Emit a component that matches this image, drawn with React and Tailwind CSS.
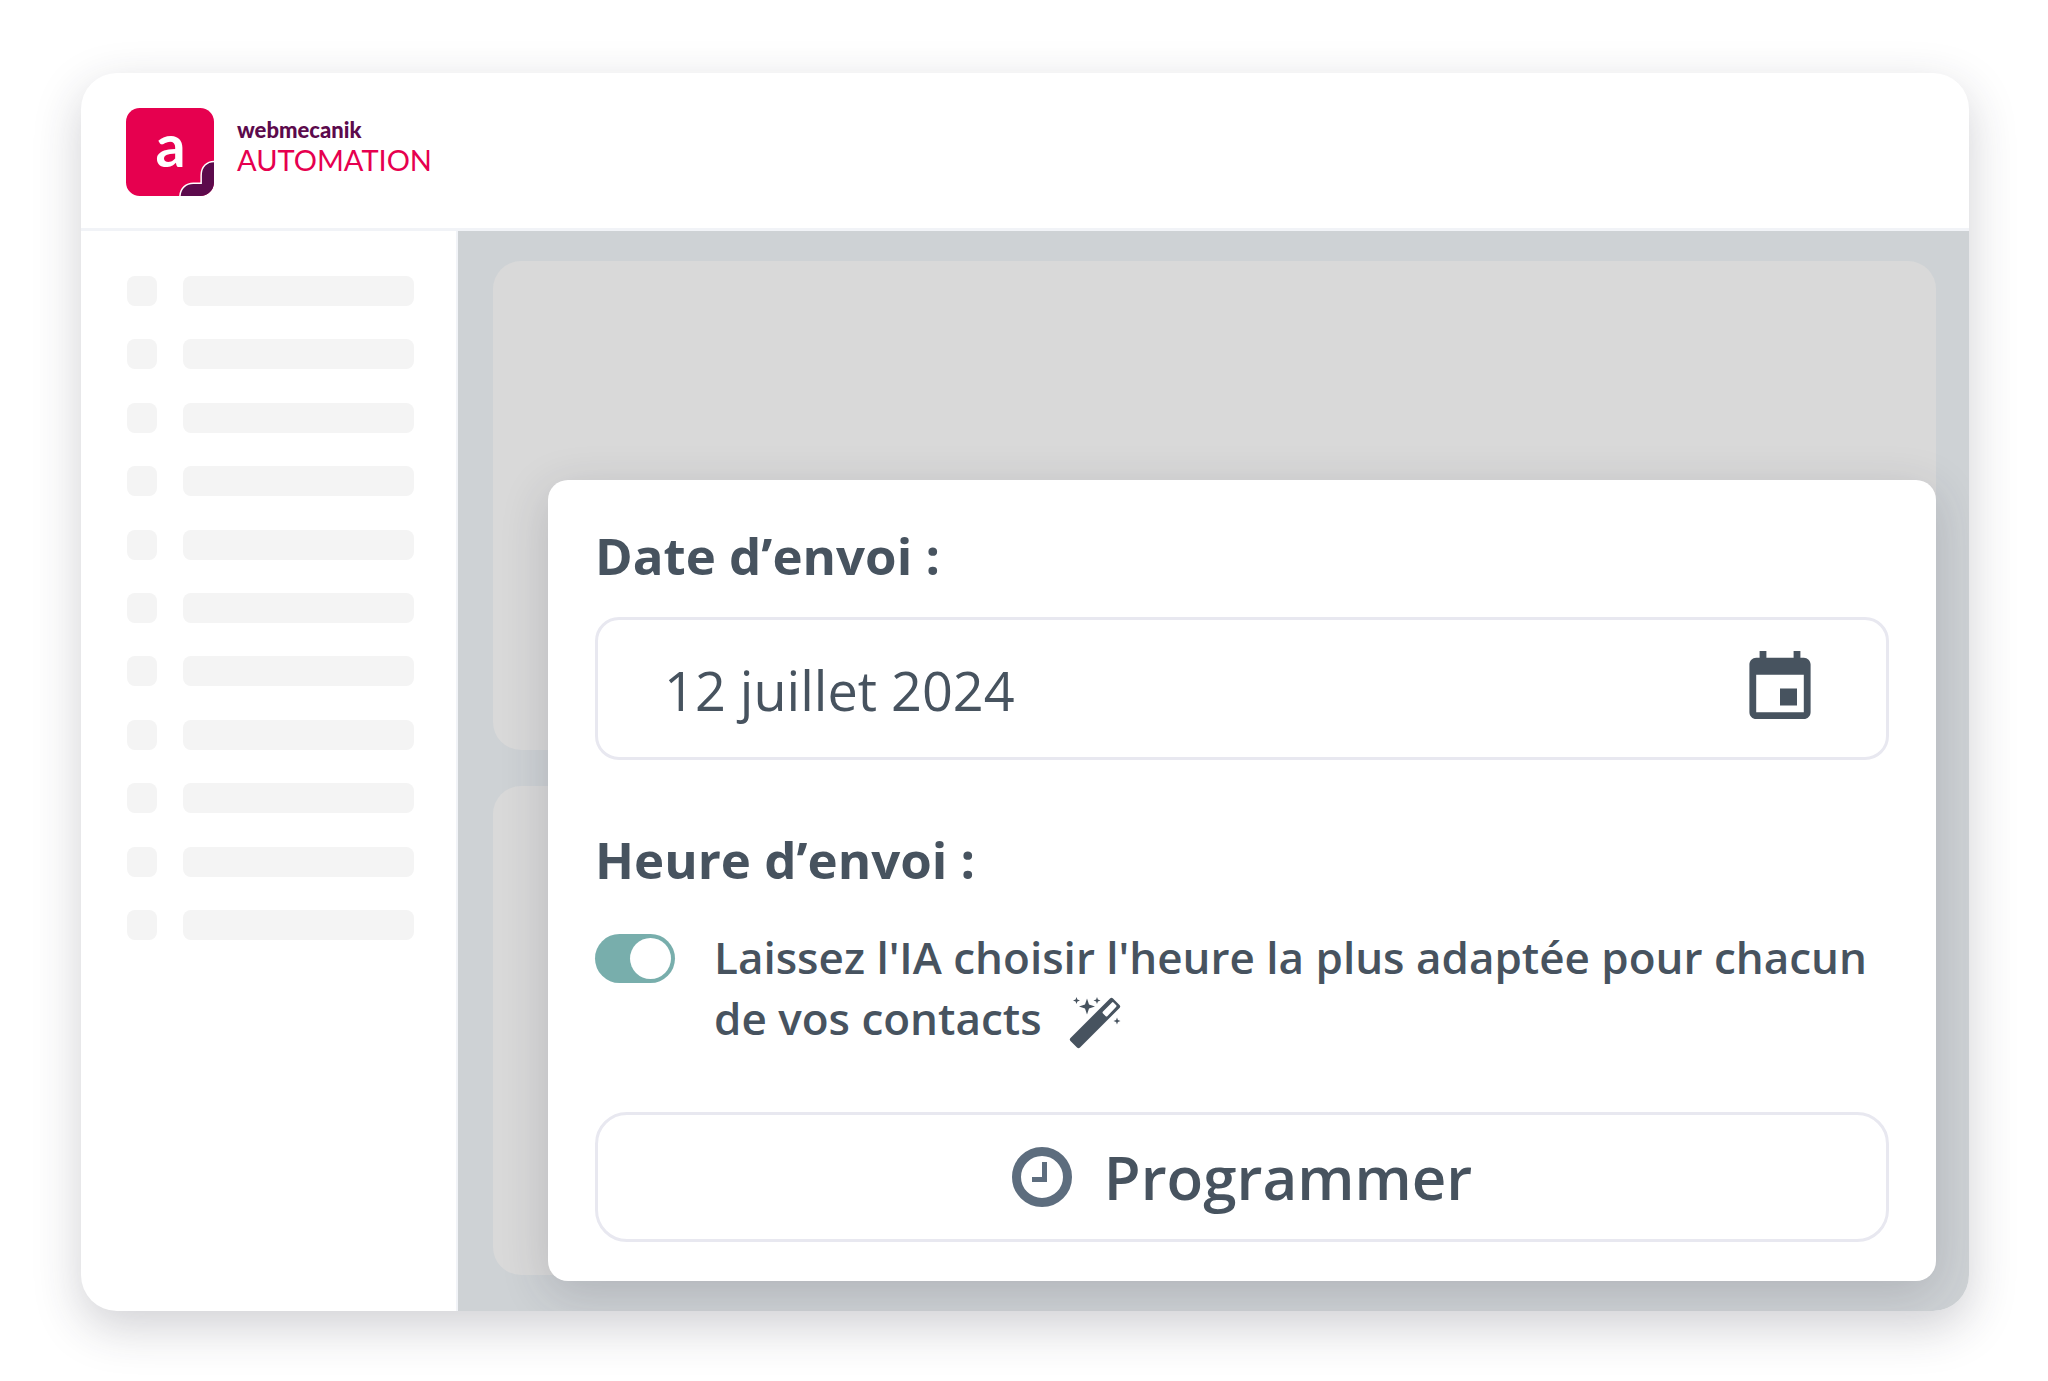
import React, { useState } from "react";

const MENU_ROWS = 11;

export default function App() {
  const [date, setDate] = useState("12 juillet 2024");
  const [useAi, setUseAi] = useState(true);

  return (
    <div className="min-h-screen bg-white pt-[73px] pr-[79px] pb-[70px] pl-[81px] font-['Open_Sans','Noto_Sans',sans-serif] text-[#47535f] flex">
      <div className="flex-1 flex flex-col bg-white rounded-[36px] overflow-hidden shadow-[0_16px_48px_rgba(40,40,60,0.22)]">
        {/* --- HEADER --- */}
        <header className="flex items-start gap-[23px] h-[158px] pt-[35px] pl-[45px] border-b-3 border-[#f1f3f7]">
          <LogoMark />
          <div className="pt-2">
            <div className="font-['Lato',sans-serif] font-black text-[22px] leading-[28px] text-[#5c0a4c]">
              webmecanik
            </div>
            <div className="font-['Lato',sans-serif] text-[29px] leading-[32px] text-[#e6004f]">
              AUTOMATION
            </div>
          </div>
        </header>

        <div className="flex-1 flex">
          {/* --- SIDEBAR --- */}
          <nav
            aria-label="Menu"
            className="w-[377px] shrink-0 border-r-2 border-[#f1f3f7] pt-[45px] pl-[46px] pr-[42px]"
          >
            <ul className="flex flex-col justify-between h-[664px]">
              {[...Array(MENU_ROWS)].map((_, i) => (
                <li key={i} className="flex gap-[26px]">
                  <span className="size-[30px] shrink-0 rounded-lg bg-[#f4f4f4]" />
                  <span className="flex-1 h-[30px] rounded-lg bg-[#f4f4f4]" />
                </li>
              ))}
            </ul>
          </nav>

          {/* --- CONTENT --- */}
          <main className="flex-1 grid bg-[#ced2d5] pt-[30px] pb-[30px] pl-[35px] pr-[33px]">
            <div className="col-start-1 row-start-1 flex flex-col gap-[36px] pb-[6px]">
              <div className="flex-1 rounded-[28px] bg-[#d9d9d9]" />
              <div className="flex-1 rounded-[28px] bg-[#d9d9d9]" />
            </div>

            <form
              onSubmit={(e) => e.preventDefault()}
              className="col-start-1 row-start-1 mt-[219px] ml-[55px] px-[47px] pt-10 pb-[39px] flex flex-col rounded-[20px] bg-white shadow-[0_12px_48px_rgba(40,40,60,0.19)]"
            >
              <label
                htmlFor="send-date"
                className="text-[51px] leading-[70px] font-bold"
              >
                Date d’envoi :
              </label>
              <div className="mt-[27px] h-[143px] flex items-start justify-between pt-[31px] pl-[66px] pr-[75px] border-3 border-[#e8e8f0] rounded-3xl">
                <input
                  id="send-date"
                  type="text"
                  value={date}
                  onChange={(e) => setDate(e.target.value)}
                  className="min-w-0 flex-1 h-[79px] text-[54px] leading-[79px] outline-none"
                />
                <CalendarIcon />
              </div>

              <h2 className="mt-[64px] text-[51px] leading-[70px] font-bold">
                Heure d’envoi :
              </h2>
              <div className="mt-[33px] flex items-start gap-[39px]">
                <input
                  id="ai-hour"
                  type="checkbox"
                  role="switch"
                  checked={useAi}
                  onChange={(e) => setUseAi(e.target.checked)}
                  className="mt-[7px] w-[80px] h-[49px] shrink-0 appearance-none rounded-full p-1 bg-gray-300 checked:bg-[#78aeac] before:block before:size-[41px] before:rounded-full before:bg-white checked:before:ml-[31px]"
                />
                <label
                  htmlFor="ai-hour"
                  className="text-[44px] leading-[61px] font-semibold"
                >
                  Laissez l'IA choisir l'heure la plus adaptée pour chacun de
                  vos contacts
                  <WandIcon />
                </label>
              </div>

              <button
                type="submit"
                className="mt-auto h-[130px] flex items-center justify-center gap-[32px] border-3 border-[#e8e8f0] rounded-[32px] text-[60px] leading-[80px] font-semibold"
              >
                <ClockIcon />
                Programmer
              </button>
            </form>
          </main>
        </div>
      </div>
    </div>
  );
}

// --- LOGO ---
function LogoMark() {
  return (
    <svg viewBox="0 0 89 89" className="size-[88px]" aria-hidden="true">
      <rect width="89" height="89" rx="14" fill="#e6004f" />
      <path
        d="M55 89C55 81 61 76 68 76H76V68C76 59 82 54 89 54V75A14 14 0 0 1 75 89Z"
        fill="#5c0a4c"
      />
      <path
        d="M54.500 89C55 81 61 76 68 76H76V68C76 59 82 54 89 54"
        fill="none"
        stroke="#fff"
        strokeWidth="1.500"
      />
      <text
        x="45"
        y="60"
        textAnchor="middle"
        fill="#fff"
        fontFamily="Lato, sans-serif"
        fontWeight="700"
        fontSize="60"
      >
        a
      </text>
    </svg>
  );
}

// --- ICONS ---
function CalendarIcon() {
  return (
    <svg
      viewBox="3 1 18 20"
      className="w-[62px] h-[68px] shrink-0"
      fill="currentColor"
      aria-hidden="true"
    >
      <path d="M17 12h-5v5h5v-5zM16 1v2H8V1H6v2H5c-1.110 0-2 .9-2 2v14c0 1.100.89 2 2 2h14c1.100 0 2-.9 2-2V5c0-1.100-.9-2-2-2h-1V1h-2zm3 18H5V8h14v11z" />
    </svg>
  );
}

function WandIcon() {
  return (
    <svg
      viewBox="0 0 52 52"
      className="inline-block size-[52px] ml-[27px] align-middle"
      fill="currentColor"
      aria-hidden="true"
    >
      <path
        fillRule="evenodd"
        d="M41 1.500Q42.500 0 44 1.500L50.500 8Q52 9.500 50.500 11L11 50.500Q9.500 52 8 50.500L1.500 44Q0 42.500 1.500 41ZM43 5.500L34 14.500Q33 15.500 34 16.500L36.500 19Q37.500 20 38.500 19L47 10Q48 9 47 8L44.500 5.500Q43.500 4.500 43 5.500Z"
      />
      <path d="M18 1.500L20 7.500L26 9.500L20 11.500L18 17.500L16 11.500L10 9.500L16 7.500Z" />
      <path d="M7.500 0L8.400 2.600L11 3.500L8.400 4.400L7.500 7L6.600 4.400L4 3.500L6.600 2.600Z" />
      <path d="M28 0L28.900 2.600L31.500 3.500L28.900 4.400L28 7L27.100 4.400L24.500 3.500L27.100 2.600Z" />
      <path d="M48 20.500L48.900 23.100L51.500 24L48.900 24.900L48 27.500L47.100 24.900L44.500 24L47.100 23.100Z" />
    </svg>
  );
}

function ClockIcon() {
  return (
    <svg
      viewBox="0 0 60 60"
      className="size-[60px] text-[#5d6d7e]"
      fill="none"
      stroke="currentColor"
      aria-hidden="true"
    >
      <circle cx="30" cy="30" r="25.500" strokeWidth="9" />
      <path d="M32.500 15V32.500H20" strokeWidth="5" />
    </svg>
  );
}
